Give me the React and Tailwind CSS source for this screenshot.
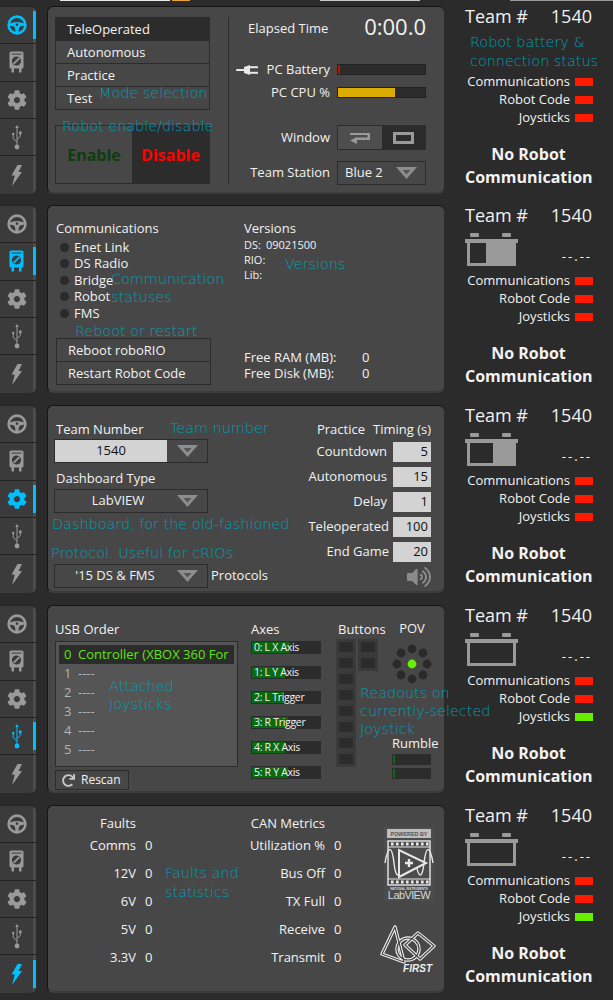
import React from "react";
import { FaCog, FaVolumeUp, FaRedo } from "react-icons/fa";

const BLUE = "#00bfff";
const GREY = "#9a9a9a";

function Wheel({ c }) {
  return (
    <svg width="20" height="20" viewBox="0 0 20 20">
      <circle cx="10" cy="10" r="8.4" fill="none" stroke={c} strokeWidth="2.6" />
      <path d="M2.5 8.5 Q10 5.5 17.5 8.5 L17.5 10.5 L13 11.5 Q11.5 13 11.5 18 L8.5 18 Q8.5 13 7 11.5 L2.5 10.5 Z" fill={c} />
      <circle cx="10" cy="9.6" r="1.3" fill="#3b3b3b" />
    </svg>
  );
}
function Meter({ c }) {
  return (
    <svg width="15" height="22" viewBox="0 0 15 22">
      <path d="M2 0.5 H13 Q14.5 0.5 14.5 2 V16 Q14.5 17.5 13 17.5 H12.5 V21.5 H10 V17.5 H5 V21.5 H2.5 V17.5 H2 Q0.5 17.5 0.5 16 V2 Q0.5 0.5 2 0.5 Z" fill={c} />
      <rect x="2.5" y="2.6" width="10" height="1" fill="#3b3b3b" />
      <circle cx="7.5" cy="10" r="4.6" fill="#3b3b3b" />
      <path d="M4.6 12.9 L10.4 7.1" stroke={c} strokeWidth="1.8" />
    </svg>
  );
}
function Usb({ c }) {
  return (
    <svg width="10" height="25" viewBox="0 0 10 25">
      <path d="M5 0 L6.8 3 H5.5 V21 H4.5 V3 H3.2 Z" fill={c} />
      <circle cx="5" cy="22" r="2.4" fill={c} />
      <path d="M5 17 L1.2 13.5 V10" stroke={c} strokeWidth="1" fill="none" />
      <circle cx="1.2" cy="9" r="1.2" fill={c} />
      <path d="M5 14.5 L8.3 11.5 V9" stroke={c} strokeWidth="1" fill="none" />
      <rect x="7" y="6.5" width="2.6" height="2.6" fill={c} />
    </svg>
  );
}
function Bolt({ c }) {
  return (
    <svg width="11" height="21" viewBox="0 0 11 21">
      <path d="M6.5 0 L11 0 L7.5 7 L11 7 L1 21 L3.8 10.5 L0.5 10.5 Z" fill={c} />
    </svg>
  );
}

function Sidebar({ active }) {
  const tabs = [
    { h: "h-[37px]", I: Wheel },
    { h: "h-[38px]", I: Meter },
    { h: "h-[38px]", I: ({ c }) => <FaCog size={20} color={c} /> },
    { h: "h-[37px]", I: Usb },
    { h: "h-[38px]", I: Bolt },
  ];
  return (
    <div className="flex h-[188px] w-[36px] flex-col overflow-hidden rounded-r-[6px] border-t border-[#242424] bg-[#3b3b3b]">
      {tabs.map(({ h, I }, i) => (
        <div key={i} className={`flex ${h} items-center ${i < 4 ? "border-b border-[#222222]" : ""}`}>
          <div className="flex h-full w-[33px] items-center justify-center">
            <I c={i === active ? BLUE : GREY} />
          </div>
          <div className="flex h-full w-[3px] items-center bg-[#4c4c4c]">
            {i === active && <div className="h-[28px] w-full bg-[#00bfff]" />}
          </div>
        </div>
      ))}
    </div>
  );
}

function Panel({ children }) {
  return (
    <div className="ml-[11px] h-[188px] w-[397px] overflow-hidden rounded-[6px] border-t border-l border-[#141414] border-b-[#3c3c3c] border-b-2 bg-[#474747] font-['Open_Sans','Noto_Sans',sans-serif] text-[13px] text-[#f2f2f2]">
      {children}
    </div>
  );
}

function Arrow() {
  return (
    <svg width="21" height="12" viewBox="0 0 21 12">
      <path d="M0 0 H21 L10.5 12 Z" fill="#8d8d8d" />
      <path d="M6.5 3 H14.5 L10.5 7.5 Z" fill="#555555" />
    </svg>
  );
}

function Dropdown({ children, white, w = "w-[154px]" }) {
  return (
    <div className={`flex h-[24px] ${w} items-center border border-[#2c2c2c] bg-[#474747]`}>
      {white ? (
        <div className="flex h-full w-[112px] items-center justify-center bg-[#d3d3d3] text-[#111]">{children}</div>
      ) : (
        <div className="flex flex-1 items-center justify-center pl-[4px]">{children}</div>
      )}
      {white && <div className="flex-1" />}
      <div className="mr-[9px] flex items-center"><Arrow /></div>
    </div>
  );
}

function Note({ className, children }) {
  return (
    <div className={`pointer-events-none absolute whitespace-nowrap font-['DejaVu_Sans',sans-serif] text-[14.4px] leading-[18px] font-extralight text-[#009db2] ${className}`}>
      {children}
    </div>
  );
}

function Battery({ dark }) {
  return (
    <svg width="53" height="33" viewBox="0 0 53 33">
      <rect x="5" y="0" width="9" height="4" rx="1" fill={GREY} />
      <rect x="37" y="0" width="9" height="4" rx="1" fill={GREY} />
      <rect x="0" y="6" width="53" height="4" fill={GREY} />
      <rect x="2" y="10" width="49" height="23" fill={GREY} />
      <rect x="5" y="10" width={dark} height="20" fill="#2b2b2b" />
    </svg>
  );
}

function Status({ label, c, h = "h-[18px]" }) {
  return (
    <div className={`flex ${h} items-center justify-end`}>
      <span className="text-[13px]">{label}</span>
      <span className={`ml-[5px] mr-[-1px] h-[8px] w-[18px] ${c}`} />
    </div>
  );
}

function RightCol({ dark, joy = "bg-[#ff1a00]" }) {
  return (
    <div className="-mt-[2px] ml-[21px] flex w-[127px] flex-col font-['Open_Sans','Noto_Sans',sans-serif] text-[#f2f2f2]">
      <div className="flex h-[24px] items-center justify-between text-[18px]">
        <span>Team #</span>
        <span>1540</span>
      </div>
      <div className="mt-[6px] flex h-[33px] items-end justify-between">
        {dark != null ? <Battery dark={dark} /> : <span />}
        {dark != null && <span className="mb-[1px] text-[13px] leading-[18px] tracking-[2px]">--.--</span>}
      </div>
      <div className="mt-[6px]">
        <Status label="Communications" c="bg-[#ff1a00]" />
        <Status label="Robot Code" c="bg-[#ff1a00]" />
        <Status label="Joysticks" c={joy} h="h-[17px]" />
      </div>
      <div className="mt-[17px] text-center text-[16px] leading-[23px] font-bold">
        <div>No Robot</div>
        <div>Communication</div>
      </div>
    </div>
  );
}

function Row({ h = "h-[200px]", active, dark, joy, panel, notes }) {
  return (
    <div className={`relative flex ${h} items-start pt-[5px]`}>
      <Sidebar active={active} />
      <Panel>{panel}</Panel>
      <RightCol dark={dark} joy={joy} />
      {notes}
    </div>
  );
}

function Lab({ children, className = "" }) {
  return <div className={`flex w-[101px] items-center justify-end ${className}`}>{children}</div>;
}

function Plug() {
  return (
    <svg width="23" height="10" viewBox="0 0 23 10" className="mr-[8px]">
      <rect x="0" y="4" width="9" height="2" rx="1" fill="#e8e8e8" />
      <path d="M8 2 L14 0 V10 L8 8 Z" fill="#e8e8e8" />
      <rect x="14" y="1.2" width="8" height="2" fill="#e8e8e8" />
      <rect x="14" y="6.8" width="8" height="2" fill="#e8e8e8" />
    </svg>
  );
}

function DrivePanel() {
  return (
    <div className="flex pl-[7px] pt-[10px]">
      <div className="w-[155px]">
        <div className="flex h-[93px] flex-col border border-[#2c2c2c] leading-[22px]">
          <div className="h-[23px] bg-[#2c2c2c] pl-[11px]">TeleOperated</div>
          <div className="h-[23px] border-b border-[#2c2c2c] pl-[11px]">Autonomous</div>
          <div className="h-[23px] border-b border-[#2c2c2c] pl-[11px]">Practice</div>
          <div className="h-[22px] pl-[11px]">Test</div>
        </div>
        <div className="mt-[15px] flex h-[59px] border border-[#2c2c2c] text-[16px] font-bold">
          <div className="flex w-[76px] items-center justify-center text-[#0f3d0f]">Enable</div>
          <div className="flex flex-1 items-center justify-center bg-[#2c2c2c] text-[#ff0000]">Disable</div>
        </div>
      </div>
      <div className="ml-[18px] h-[167px] w-px bg-[#2c2c2c]" />
      <div className="w-[197px]">
        <div className="flex h-[24px] items-center justify-between pl-[19px]">
          <span>Elapsed Time</span>
          <span className="mb-[5px] text-[22px]">0:00.0</span>
        </div>
        <div className="mt-[23px] flex h-[11px] items-center">
          <Lab><Plug />PC Battery</Lab>
          <div className="ml-[7px] h-[11px] w-[89px] border border-[#222] bg-[#2c2c2c]">
            <div className="h-full w-[2px] bg-[#c81000]" />
          </div>
        </div>
        <div className="mt-[12px] flex h-[11px] items-center">
          <Lab>PC CPU %</Lab>
          <div className="ml-[7px] h-[11px] w-[89px] border border-[#222] bg-[#2c2c2c]">
            <div className="h-full w-[57px] bg-[#dcac00]" />
          </div>
        </div>
        <div className="mt-[27px] flex h-[25px] items-center">
          <Lab>Window</Lab>
          <div className="ml-[7px] flex h-[25px] w-[89px] border border-[#2c2c2c] bg-[#2c2c2c]">
            <div className="flex w-[44px] items-center justify-center bg-[#4e4e4e]">
              <svg width="22" height="12" viewBox="0 0 22 12">
                <path d="M1 1 H21 V8 H8 V5.5 H18.5 V3 H1 Z" fill="#9a9a9a" />
                <path d="M8 5 V12 L1 8.5 Z" fill="#9a9a9a" />
              </svg>
            </div>
            <div className="flex flex-1 items-center justify-center">
              <div className="h-[12px] w-[21px] border-[3px] border-[#9a9a9a]" />
            </div>
          </div>
        </div>
        <div className="mt-[11px] flex h-[24px] items-center">
          <Lab>Team Station</Lab>
          <div className="ml-[7px] flex h-[24px] w-[89px] items-center justify-between border border-[#2c2c2c] pl-[7px] pr-[8px]">
            <span>Blue 2</span>
            <Arrow />
          </div>
        </div>
      </div>
    </div>
  );
}

function Led({ children }) {
  return (
    <div className="flex h-[16.5px] items-center">
      <span className="ml-[4px] h-[9px] w-[9px] rounded-full bg-[#2a2a2a]" />
      <span className="ml-[5px]">{children}</span>
    </div>
  );
}

function DiagPanel() {
  return (
    <div className="flex pl-[8px] pt-[13px]">
      <div className="w-[155px]">
        <div className="h-[18px] leading-[18px]">Communications</div>
        <div className="mt-[2px]">
          <Led>Enet Link</Led>
          <Led>DS Radio</Led>
          <Led>Bridge</Led>
          <Led>Robot</Led>
          <Led>FMS</Led>
        </div>
        <div className="mt-[16px] flex h-[47px] flex-col border border-[#2c2c2c] leading-[22px]">
          <div className="h-[23px] border-b border-[#2c2c2c] pl-[11px]">Reboot roboRIO</div>
          <div className="flex-1 pl-[11px]">Restart Robot Code</div>
        </div>
      </div>
      <div className="ml-[33px] w-[150px]">
        <div className="h-[18px] leading-[18px]">Versions</div>
        <div className="mt-px text-[11px]">
          <div className="flex h-[15px] items-center"><span className="w-[22px]">DS:</span><span>09021500</span></div>
          <div className="flex h-[15px] items-center">RIO:</div>
          <div className="flex h-[15px] items-center">Lib:</div>
        </div>
        <div className="mt-[67px] flex h-[16px] items-center"><span className="w-[118px]">Free RAM (MB):</span><span>0</span></div>
        <div className="flex h-[16px] items-center"><span className="w-[118px]">Free Disk (MB):</span><span>0</span></div>
      </div>
    </div>
  );
}

function Timing({ label, v, mr = "mr-[6px]" }) {
  return (
    <div className="flex h-[20px] items-center justify-end">
      <span className={mr}>{label}</span>
      <div className="flex h-[20px] w-[38px] items-center justify-end bg-[#d3d3d3] pr-[3px] text-[#111]">{v}</div>
    </div>
  );
}

function SetupPanel() {
  return (
    <div className="flex justify-between pl-[6px] pr-[13px] pt-[14px]">
      <div>
        <div className="h-[18px] pl-[2px] leading-[18px]">Team Number</div>
        <div className="mt-px"><Dropdown white>1540</Dropdown></div>
        <div className="mt-[6px] h-[18px] pl-[2px] leading-[18px]">Dashboard Type</div>
        <div className="mt-[2px]"><Dropdown>LabVIEW</Dropdown></div>
        <div className="mt-[51px] flex items-center">
          <Dropdown><span className="pr-[6px]">'15 DS &amp; FMS</span></Dropdown>
          <span className="ml-[3px]">Protocols</span>
        </div>
      </div>
      <div className="flex w-[140px] flex-col">
        <div className="flex h-[18px] items-center justify-end gap-[8px] leading-[18px]">
          <span>Practice</span><span>Timing (s)</span>
        </div>
        <div className="mt-[4px] flex flex-col gap-[5px]">
          <Timing label="Countdown" v="5" />
          <Timing label="Autonomous" v="15" />
          <Timing label="Delay" v="1" />
          <Timing label="Teleoperated" v="100" mr="mr-[4px]" />
          <Timing label="End Game" v="20" mr="mr-[4px]" />
        </div>
        <div className="mt-[3px] flex justify-end"><FaVolumeUp size={24} color="#8a8a8a" /></div>
      </div>
    </div>
  );
}

function AxisBar({ label, w }) {
  return (
    <div className="relative h-[13px] w-[70px] border border-[#2c2c2c] bg-[#2c2c2c]">
      <div className={`h-full ${w} bg-[#0a6a12]`} />
      <span className="absolute left-[2px] top-[-3px] whitespace-nowrap text-[10.5px] leading-[16px] tracking-[-0.3px]">{label}</span>
    </div>
  );
}

function BtnCol({ n }) {
  return (
    <div className="flex w-[20px] flex-col items-center gap-[6px] bg-[#3a3a3a] py-[3px]">
      {Array.from({ length: n }, (_, i) => (
        <div key={i} className="h-[10px] w-[14px] bg-[#2c2c2c]" />
      ))}
    </div>
  );
}

function Pov() {
  const dots = [[20, 5], [31, 9], [35, 20], [31, 31], [20, 35], [9, 31], [5, 20], [9, 9]];
  return (
    <svg width="40" height="40" viewBox="0 0 40 40">
      {dots.map(([x, y], i) => <circle key={i} cx={x} cy={y} r="4.4" fill="#2a2a2a" />)}
      <circle cx="20" cy="20" r="4.4" fill="#66f000" />
    </svg>
  );
}

function UsbPanel() {
  return (
    <div className="flex pl-[7px] pt-[14px]">
      <div className="w-[183px]">
        <div className="h-[18px] leading-[18px]">USB Order</div>
        <div className="mt-[3px] h-[126px] border border-[#2c2c2c] bg-[#555555] px-[3px] pt-[3px]">
          <div className="flex h-[19px] items-center overflow-hidden whitespace-nowrap bg-[#2c2c2c] pl-[5px] text-[#5ce60a]">
            <span className="w-[13px]">0</span><span className="ml-[1px]">Controller (XBOX 360 For</span>
          </div>
          {[1, 2, 3, 4, 5].map((n) => (
            <div key={n} className="flex h-[19px] items-center pl-[5px] text-[#b4b4b4]">
              <span className="w-[14px]">{n}</span><span>----</span>
            </div>
          ))}
        </div>
        <div className="mt-[3px] flex h-[20px] w-[74px] items-center border border-[#2c2c2c] pl-[6px] text-[12px]">
          <FaRedo size={13} color="#c8c8c8" />
          <span className="ml-[6px]">Rescan</span>
        </div>
      </div>
      <div className="ml-[13px] w-[70px]">
        <div className="h-[18px] leading-[18px]">Axes</div>
        <div className="mt-[3px] flex flex-col gap-[12px]">
          <AxisBar label="0: L X Axis" w="w-[38px]" />
          <AxisBar label="1: L Y Axis" w="w-[33px]" />
          <AxisBar label="2: L Trigger" w="w-[32px]" />
          <AxisBar label="3: R Trigger" w="w-[36px]" />
          <AxisBar label="4: R X Axis" w="w-[33px]" />
          <AxisBar label="5: R Y Axis" w="w-[36px]" />
        </div>
      </div>
      <div className="ml-[15px] w-[56px]">
        <div className="h-[18px] pl-[2px] leading-[18px]">Buttons</div>
        <div className="mt-px flex items-start gap-[2px]">
          <BtnCol n={8} />
          <BtnCol n={2} />
        </div>
      </div>
      <div className="w-[48px]">
        <div className="h-[17px] w-[40px] text-center leading-[17px]">POV</div>
        <div className="mt-[7px]"><Pov /></div>
        <div className="mt-[50px] h-[18px] leading-[18px]">Rumble</div>
        <div className="mt-[2px] flex flex-col gap-[3px]">
          {[0, 1].map((i) => (
            <div key={i} className="h-[11px] w-[39px] border border-[#2c2c2c] bg-[#2c2c2c]">
              <div className="h-full w-[2px] bg-[#0a6a12]" />
            </div>
          ))}
        </div>
      </div>
    </div>
  );
}

function Stat({ w, label, v = "0" }) {
  return (
    <div className="flex h-[18px] items-center">
      <span className={`${w} text-right`}>{label}</span>
      <span className="ml-[9px]">{v}</span>
    </div>
  );
}

function LabviewLogo() {
  return (
    <svg width="50" height="74" viewBox="0 0 50 74" className="ml-[4px]">
      <rect x="0" y="0" width="50" height="74" fill="#4c4c4c" />
      <rect x="3" y="2" width="44" height="9" fill="#bdbdbd" />
      <text x="25" y="9" textAnchor="middle" fontSize="5.4" fontWeight="700" fontFamily="Liberation Sans, sans-serif" fill="#555">POWERED BY</text>
      <rect x="4" y="14" width="42" height="44" fill="none" stroke="#e8e8e8" strokeWidth="1.4" />
      <path d="M4 20 H46 M4 52 H46" stroke="#e8e8e8" strokeWidth="1.2" />
      {[7, 12, 17, 22, 27, 32, 37, 42].map((x) => (
        <g key={x}>
          <rect x={x} y="15.5" width="2.6" height="3" fill="#e8e8e8" />
          <rect x={x} y="53.5" width="2.6" height="3" fill="#e8e8e8" />
        </g>
      ))}
      <path d="M1 36 C4 18 8 18 10 36 C12 54 16 50 18 36 M32 36 C34 50 38 54 40 36 C42 18 46 18 49 36" fill="none" stroke="#e8e8e8" strokeWidth="1.4" />
      <path d="M15 23 L15 50 L42 36 Z" fill="#4c4c4c" stroke="#e8e8e8" strokeWidth="2" />
      <path d="M21 36 H29 M25 32 V40" stroke="#e8e8e8" strokeWidth="2.4" />
      <text x="25" y="62.5" textAnchor="middle" fontSize="3" fontWeight="700" fontFamily="Liberation Sans, sans-serif" fill="#d8d8d8">NATIONAL INSTRUMENTS</text>
      <text x="25" y="72" textAnchor="middle" fontSize="11" fontFamily="Liberation Sans, sans-serif" fill="#d8d8d8" letterSpacing="-0.6">LabVIEW</text>
    </svg>
  );
}

function FirstLogo() {
  const shapes = (
    <>
      <path d="M15 2 L2 29 L24 37 Z" />
      <circle cx="28" cy="24" r="11" />
      <path d="M38 8 L54 21 L40 34 L25 20 Z" />
    </>
  );
  return (
    <svg width="56" height="48" viewBox="0 0 56 48">
      <g fill="none" stroke="#eeeeee" strokeWidth="3.4" strokeLinejoin="round">{shapes}</g>
      <g fill="none" stroke="#474747" strokeWidth="1.2" strokeLinejoin="round">{shapes}</g>
      <text x="52" y="47" textAnchor="end" fontSize="10" fontStyle="italic" fontWeight="700" fontFamily="Liberation Sans, sans-serif" fill="#eeeeee">FIRST</text>
    </svg>
  );
}

function StatsPanel() {
  return (
    <div className="flex pt-[9px]">
      <div className="w-[110px]">
        <Stat w="w-[88px]" label="Faults" v="" />
        <div className="mt-[4px] flex flex-col gap-[10px]">
          <Stat w="w-[88px]" label="Comms" />
          <Stat w="w-[88px]" label="12V" />
          <Stat w="w-[88px]" label="6V" />
          <Stat w="w-[88px]" label="5V" />
          <Stat w="w-[88px]" label="3.3V" />
        </div>
      </div>
      <div className="ml-[22px] w-[165px]">
        <Stat w="w-[145px]" label="CAN Metrics" v="" />
        <div className="mt-[4px] flex flex-col gap-[10px]">
          <Stat w="w-[145px]" label="Utilization %" />
          <Stat w="w-[145px]" label="Bus Off" />
          <Stat w="w-[145px]" label="TX Full" />
          <Stat w="w-[145px]" label="Receive" />
          <Stat w="w-[145px]" label="Transmit" />
        </div>
      </div>
      <div className="ml-[35px] flex flex-col pt-[12px]">
        <LabviewLogo />
        <div className="mt-[24px]"><FirstLogo /></div>
      </div>
    </div>
  );
}

export default function App() {
  return (
    <div className="min-h-[1000px] w-[613px] overflow-hidden bg-[#2b2b2b]">
      <div className="flex h-px">
        <div className="ml-[60px] w-[110px] bg-[#e8e8e8]" />
        <div className="ml-[2px] w-[18px] bg-[#f0a030]" />
        <div className="ml-[130px] w-[100px] bg-[#c8c8c8]" />
        <div className="ml-[90px] w-[103px] bg-[#9a9a9a]" />
      </div>
      <Row
        h="h-[199px]"
        active={0}
        panel={<DrivePanel />}
        notes={
          <>
            <Note className="left-[99px] top-[83px]">Mode selection</Note>
            <Note className="left-[62px] top-[116px]">Robot enable/disable</Note>
            <Note className="left-[470px] top-[32px]">Robot battery &amp;</Note>
            <Note className="left-[470px] top-[51px]">connection status</Note>
          </>
        }
      />
      <Row
        active={1}
        dark={16}
        panel={<DiagPanel />}
        notes={
          <>
            <Note className="left-[111px] top-[70px]">Communication</Note>
            <Note className="left-[111px] top-[88px]">statuses</Note>
            <Note className="left-[75px] top-[122px]">Reboot or restart</Note>
            <Note className="left-[285px] top-[55px]">Versions</Note>
          </>
        }
      />
      <Row
        active={2}
        dark={23}
        panel={<SetupPanel />}
        notes={
          <>
            <Note className="left-[170px] top-[19px]">Team number</Note>
            <Note className="left-[52px] top-[115px]">Dashboard, for the old-fashioned</Note>
            <Note className="left-[51px] top-[144px]">Protocol. Useful for cRIOs.</Note>
          </>
        }
      />
      <Row
        active={3}
        dark={43}
        joy="bg-[#66f000]"
        panel={<UsbPanel />}
        notes={
          <>
            <Note className="left-[109px] top-[77px]">Attached</Note>
            <Note className="left-[109px] top-[95px]">Joysticks</Note>
            <Note className="left-[360px] top-[84px]">Readouts on</Note>
            <Note className="left-[360px] top-[102px]">currently-selected</Note>
            <Note className="left-[360px] top-[120px]">Joystick</Note>
          </>
        }
      />
      <Row
        active={4}
        dark={43}
        joy="bg-[#66f000]"
        panel={<StatsPanel />}
        notes={
          <>
            <Note className="left-[165px] top-[64px]">Faults and</Note>
            <Note className="left-[165px] top-[83px]">statistics</Note>
          </>
        }
      />
    </div>
  );
}
